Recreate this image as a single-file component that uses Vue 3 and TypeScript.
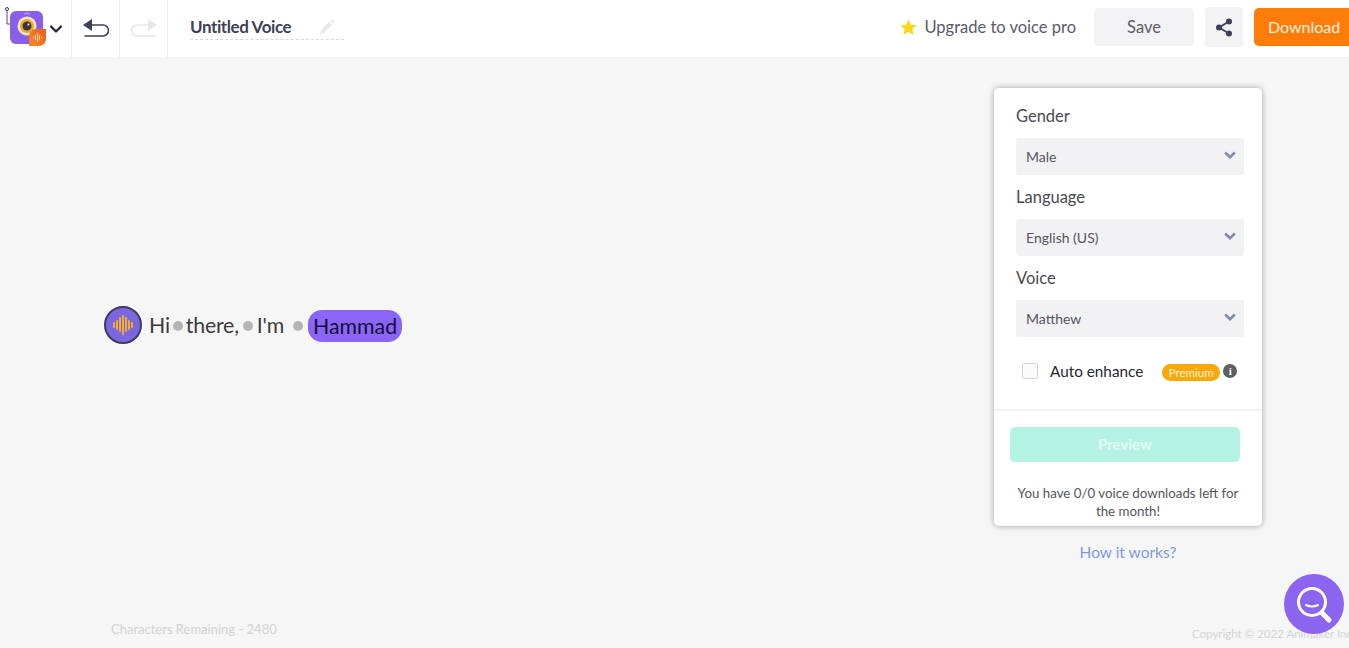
<script setup lang="ts">
const fields = [
  { label: 'Gender', value: 'Male' },
  { label: 'Language', value: 'English (US)' },
  { label: 'Voice', value: 'Matthew' },
]
const bars = [6, 10, 15, 20, 15, 10, 6]
</script>

<template>
  <div class="page">
    <header class="topbar">
      <div class="brand cell">
        <svg class="logo" width="48" height="57" viewBox="0 0 48 57">
          <defs>
            <linearGradient id="leaf" x1="0" y1="1" x2="1" y2="0">
              <stop offset="0" stop-color="#f8871f" />
              <stop offset="1" stop-color="#ee5f1c" />
            </linearGradient>
          </defs>
          <path d="M7 10V24H11" fill="none" stroke="#555" stroke-width="1" />
          <circle cx="7" cy="9" r="1.500" fill="#fff" stroke="#444" stroke-width="1" />
          <rect x="10" y="11" width="33" height="33" rx="6" fill="#8a5ee8" />
          <path d="M24 14q3-2 6 0" fill="none" stroke="#c9b2f5" stroke-width="1" />
          <circle cx="27" cy="26" r="9.500" fill="#f8e6bd" />
          <circle cx="27" cy="26" r="7" fill="#eea82a" />
          <circle cx="27" cy="26" r="4.500" fill="#3b3340" />
          <circle cx="28.500" cy="24.500" r="1" fill="#fff" />
          <path d="M29 36a7 7 0 0 1 7-7h10v10a7 7 0 0 1-7 7H29z" fill="url(#leaf)" />
          <path d="M33.500 36.500v2M35.500 35v5M37.500 33v9M39.500 35v5M41.500 36.500v2" stroke="#ffd9b0" stroke-width="1" />
        </svg>
        <svg class="chev" width="14" height="10" viewBox="0 0 14 10">
          <path d="M2 2.500l5 5 5-5" fill="none" stroke="#23233a" stroke-width="2.200" stroke-linecap="round" stroke-linejoin="round" />
        </svg>
      </div>
      <div class="cell action">
        <svg width="28" height="22" viewBox="0 0 28 22">
          <path d="M9 7H21a5.500 5.500 0 0 1 0 11H2.500" fill="none" stroke="#3f3f58" stroke-width="1.500" />
          <path d="M10 1v12L1 7z" fill="#3f3f58" />
        </svg>
      </div>
      <div class="cell action">
        <svg width="28" height="22" viewBox="0 0 28 22">
          <path d="M19 7H7a5.500 5.500 0 0 0 0 11H25.500" fill="none" stroke="#e6e6ea" stroke-width="1.500" />
          <path d="M18 1v12l9-6z" fill="#e6e6ea" />
        </svg>
      </div>
      <div class="title">
        <span>Untitled Voice</span>
        <svg width="16" height="16" viewBox="0 0 16 16">
          <path d="M1 15l1-4 8-8 3 3-8 8zM11 2l1.500-1.500 3 3L14 5z" fill="#e9e9e9" />
        </svg>
      </div>
      <div class="upgrade">
        <svg width="17" height="16" viewBox="0 0 18 17">
          <path d="M9 .500l2.600 5.500 5.900.700-4.400 4.100 1.200 5.900L9 13.800l-5.300 2.900 1.200-5.900L.500 6.700 6.400 6z" fill="#fbd51d" />
        </svg>
        <span>Upgrade to voice pro</span>
      </div>
      <button class="btn save">Save</button>
      <button class="btn share">
        <svg width="18" height="19" viewBox="0 0 18 19">
          <path d="M14 3.500L4 9.500l10 6" fill="none" stroke="#3f3f58" stroke-width="1.800" />
          <circle cx="14" cy="3.500" r="3" fill="#3f3f58" />
          <circle cx="4" cy="9.500" r="3" fill="#3f3f58" />
          <circle cx="14" cy="15.500" r="3" fill="#3f3f58" />
        </svg>
      </button>
      <button class="btn download">Download</button>
    </header>

    <main class="workspace">
      <section class="editor">
        <div class="line">
          <span class="voice-badge">
            <i v-for="(h, i) in bars" :key="i" :style="{ height: h + 'px' }"></i>
          </span>
          <span class="word first">Hi</span>
          <span class="dot tight"></span>
          <span class="word">there,</span>
          <span class="dot"></span>
          <span class="word">I'm</span>
          <span class="dot wide"></span>
          <span class="name">Hammad</span>
        </div>
        <p class="remaining">Characters Remaining - 2480</p>
      </section>

      <aside class="side">
        <div class="panel">
          <div class="fields">
            <div v-for="f in fields" :key="f.label" class="field">
              <label>{{ f.label }}</label>
              <div class="select">
                <span>{{ f.value }}</span>
                <svg width="12" height="8" viewBox="0 0 12 8">
                  <path d="M1.200 1.500L6 6.200l4.800-4.700" fill="none" stroke="#8088b5" stroke-width="2.600" />
                </svg>
              </div>
            </div>
            <div class="enhance">
              <span class="check"></span>
              <span class="enhance-label">Auto enhance</span>
              <span class="premium">Premium</span>
              <span class="info">i</span>
            </div>
          </div>
          <div class="panel-foot">
            <button class="preview">Preview</button>
            <p class="quota">You have 0/0 voice downloads left for the month!</p>
          </div>
        </div>
        <a class="how">How it works?</a>
      </aside>

      <span class="copyright">Copyright © 2022 Animaker Inc.</span>
      <button class="fab" aria-label="Search">
        <svg width="38" height="40" viewBox="0 0 38 40">
          <circle cx="17" cy="17" r="13.500" fill="none" stroke="#fff" stroke-width="3" />
          <path d="M11 20q6 3 12 0" fill="none" stroke="#fff" stroke-width="2" stroke-linecap="round" />
          <path d="M27 28l7 7" stroke="#fff" stroke-width="5" stroke-linecap="round" />
        </svg>
      </button>
    </main>
  </div>
</template>

<style>
html, body { margin: 0; overflow: hidden; }
</style>

<style scoped>
.page {
  width: 1349px;
  height: 648px;
  display: flex;
  flex-direction: column;
  background: #f6f6f6;
  font-family: "Lato", "Open Sans", sans-serif;
  overflow: hidden;
}
.topbar {
  height: 57px;
  flex: none;
  background: #fff;
  display: flex;
  align-items: center;
  overflow: hidden;
}
.cell {
  height: 57px;
  display: flex;
  align-items: center;
  justify-content: center;
  border-right: 1px solid #ececec;
  box-sizing: border-box;
}
.brand { width: 72px; justify-content: flex-start; }
.logo { flex: none; }
.chev { margin-left: 1px; margin-top: 0; }
.action { width: 48px; }
.title {
  margin-left: 22px;
  width: 154px;
  height: 27px;
  display: flex;
  align-items: center;
  justify-content: space-between;
  padding: 2px 9px 0 0;
  box-sizing: border-box;
  border-bottom: 1px dashed #d8d8d8;
  color: #3f3f58;
  font-size: 17px;
  font-weight: 700;
  letter-spacing: -0.4px;
  margin-top: -5px;
}
.upgrade {
  margin-left: auto;
  margin-bottom: 3px;
  display: flex;
  align-items: center;
  gap: 7px;
  color: #5b5b68;
  font-size: 16.500px;
}
.btn {
  border: none;
  font-family: inherit;
  padding: 0;
  flex: none;
  margin-bottom: 3px;
}
.save {
  margin-left: 18px;
  width: 100px;
  height: 38px;
  border-radius: 4px;
  background: #f3f3f5;
  color: #5b5b68;
  font-size: 16.500px;
}
.share {
  margin-left: 11px;
  width: 38px;
  height: 40px;
  border-radius: 4px;
  background: #f3f3f5;
  display: flex;
  align-items: center;
  justify-content: center;
}
.download {
  margin-left: 11px;
  width: 95px;
  height: 38px;
  border-radius: 5px 0 0 5px;
  background: #ff7b0a;
  color: #fff3de;
  font-size: 16px;
  text-align: left;
  padding: 0 0 2px 14px;
  box-sizing: border-box;
}
.workspace {
  position: relative;
  flex: 1;
  display: flex;
  min-height: 0;
}
.editor {
  flex: 1;
  display: flex;
  flex-direction: column;
  padding-left: 104px;
  box-sizing: border-box;
}
.line {
  display: flex;
  align-items: center;
  height: 40px;
  margin-top: 248px;
}
.voice-badge {
  width: 34px;
  height: 34px;
  margin-top: -1px;
  border-radius: 50%;
  border: 2px solid #3f3a63;
  background: #7c66e0;
  display: flex;
  align-items: center;
  justify-content: center;
  gap: 1px;
  flex: none;
}
.voice-badge i {
  width: 2px;
  border-radius: 1px;
  background: #f4ad2b;
  display: block;
}
.word {
  font-size: 21.300px;
  color: #3c3c3c;
  letter-spacing: -0.2px;
}
.first { margin-left: 7px; }
.dot {
  width: 10px;
  height: 10px;
  border-radius: 50%;
  background: #b5b5b5;
  margin: 2px 4px 0;
  flex: none;
}
.dot.tight { margin: 2px 3px 0; }
.dot.wide { margin: 2px 4px 0 9px; }
.name {
  height: 32px;
  line-height: 32px;
  padding: 0 5px;
  border-radius: 14px;
  background: #8b65f5;
  color: #150b38;
  font-size: 21.300px;
  margin-left: 1px;
  margin-top: 1px;
}
.remaining {
  margin: auto 0 11px 7px;
  font-size: 13px;
  color: #d3d3d3;
}
.side {
  width: 268px;
  margin-right: 87px;
  margin-top: 31px;
  display: flex;
  flex-direction: column;
  align-items: center;
  flex: none;
}
.panel {
  width: 268px;
  height: 438px;
  border-radius: 5px;
  background: #fff;
  box-shadow: 0 0 6px rgba(0, 0, 0, 0.35);
  display: flex;
  flex-direction: column;
  box-sizing: border-box;
}
.fields {
  height: 323px;
  flex: none;
  padding: 18px 18px 0 22px;
  box-sizing: border-box;
  border-bottom: 2px solid #f3f3f3;
}
.field { height: 81px; }
.field label {
  display: block;
  height: 32px;
  line-height: 20px;
  font-size: 16.500px;
  color: #4a4a52;
}
.select {
  height: 37px;
  border-radius: 3px;
  background: #f2f2f4;
  display: flex;
  align-items: center;
  justify-content: space-between;
  padding: 0 8px 0 10px;
  font-size: 14px;
  color: #55555f;
}
.select svg { margin-top: -3px; }
.enhance {
  display: flex;
  align-items: center;
  margin-top: 9px;
  padding-left: 6px;
  height: 26px;
}
.check {
  width: 14px;
  height: 14px;
  border: 1px solid #d5d5d5;
  border-radius: 2px;
  background: #fbfbfb;
  flex: none;
}
.enhance-label {
  margin-left: 12px;
  font-size: 15.300px;
  color: #27272f;
}
.premium {
  margin-left: 19px;
  margin-top: 2px;
  width: 58px;
  height: 17px;
  line-height: 17px;
  border-radius: 9px;
  background: #f9a80c;
  color: #fff3d0;
  font-size: 11.500px;
  text-align: center;
}
.info {
  margin-left: 3px;
  width: 14px;
  height: 14px;
  line-height: 14px;
  border-radius: 50%;
  background: #5f5f5f;
  color: #fff;
  font-size: 11px;
  font-weight: 900;
  text-align: center;
  font-family: "Liberation Serif", serif;
}
.panel-foot {
  flex: 1;
  padding: 16px 22px 0 16px;
}
.preview {
  display: block;
  width: 230px;
  height: 35px;
  padding: 0 0 2px;
  border: none;
  border-radius: 5px;
  background: #b4f3e2;
  color: #e3faf4;
  font-family: inherit;
  font-size: 15px;
  font-weight: 700;
}
.quota {
  margin: 22px -9px 0 -3px;
  font-size: 13.300px;
  line-height: 18px;
  color: #55555b;
  text-align: center;
}
.how {
  margin-top: 16px;
  font-size: 15.500px;
  line-height: 20px;
  color: #7f9ade;
}
.copyright {
  position: absolute;
  left: 1192px;
  top: 570px;
  font-size: 11.500px;
  line-height: 14px;
  color: #d4d4d4;
  white-space: nowrap;
}
.fab {
  position: absolute;
  left: 1284px;
  top: 517px;
  width: 60px;
  height: 60px;
  padding: 11px 0 0 11px;
  box-sizing: border-box;
  border: none;
  border-radius: 50%;
  background: #8b65f0;
  display: flex;
  align-items: flex-start;
  justify-content: flex-start;
}
.fab svg { display: block; }
</style>
